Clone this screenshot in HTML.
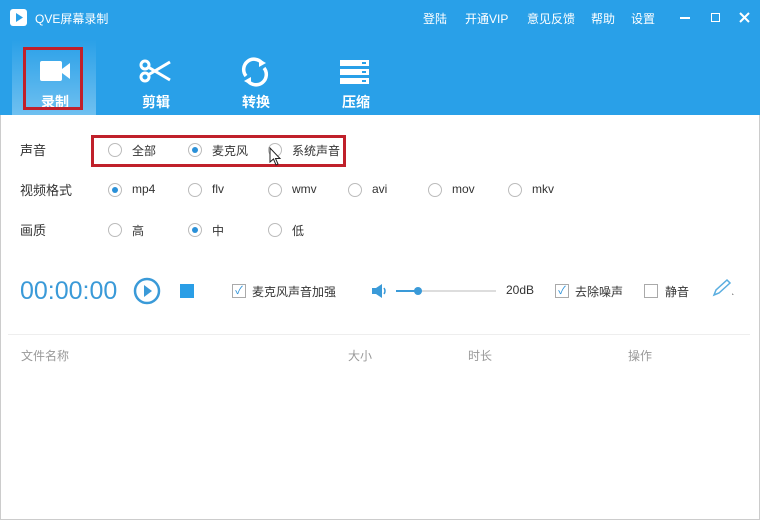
<!DOCTYPE html><html><head><meta charset="utf-8"><style>
*{margin:0;padding:0;box-sizing:border-box}
body{width:760px;height:520px;overflow:hidden;background:#fff;font-family:"Liberation Sans","Noto Sans CJK SC",sans-serif;font-size:12px;color:#333;position:relative}
.hdr{position:absolute;left:0;top:0;width:760px;height:115px;background:#29a0e8}
.a{position:absolute}
.t{color:#fff;font-size:12px}
.tab{position:absolute;top:58px;width:40px;text-align:center;color:#fff;font-size:14px;font-weight:bold}
.r{position:absolute;width:14px;height:14px;border:1px solid #bbb;border-radius:50%;background:#fff}
.r.on::after{content:"";position:absolute;left:3px;top:3px;width:6px;height:6px;border-radius:50%;background:#2a90d8}
.lb{position:absolute;font-size:12px;color:#333}
.cb{position:absolute;width:14px;height:14px;border:1px solid #aaa;background:#fff;color:#2a90d8;font-size:11px;line-height:12px;text-align:center}
.g{color:#999}
</style></head><body>
<div class="hdr"></div>
<div class="a" style="left:12px;top:40px;width:84px;height:75px;background:linear-gradient(#2aa0e8,#6fc0f0)"></div>
<div class="a" style="left:10px;top:9px;width:17px;height:17px;background:#fff;border-radius:3px"></div>
<svg class="a" style="left:10px;top:9px" width="17" height="17"><polygon points="6,4 6,13 13,8.5" fill="#29a0e8"/></svg>
<div class="a t" style="left:35px;top:10px">QVE屏幕录制</div>
<div class="a t" style="left:423px;top:10px">登陆</div>
<div class="a t" style="left:465px;top:10px">开通VIP</div>
<div class="a t" style="left:527px;top:10px">意见反馈</div>
<div class="a t" style="left:591px;top:10px">帮助</div>
<div class="a t" style="left:631px;top:10px">设置</div>
<div class="a" style="left:680px;top:17px;width:10px;height:2px;background:#fff"></div>
<div class="a" style="left:711px;top:13px;width:9px;height:9px;border:1.5px solid #fff"></div>
<svg class="a" style="left:739px;top:12px" width="11" height="11"><path d="M1 1L10 10M10 1L1 10" stroke="#fff" stroke-width="2"/></svg>
<!-- tab icons -->
<svg class="a" style="left:38px;top:59px" width="34" height="24"><rect x="2" y="2" width="22" height="20" rx="2" fill="#fff"/><polygon points="24,10 32,4 32,20 24,14" fill="#fff"/></svg>
<svg class="a" style="left:138px;top:58px" width="36" height="26" fill="none" stroke="#fff" stroke-width="3"><circle cx="7" cy="7" r="4"/><circle cx="7" cy="19" r="4"/><path d="M10 9L32 22M10 17L32 4"/></svg>
<svg class="a" style="left:240px;top:57px" width="30" height="30" fill="none" stroke="#fff" stroke-width="3.5"><path d="M6 19A10 10 0 0 1 22 6"/><path d="M24 11A10 10 0 0 1 8 24"/><polygon points="19,2 26,6 19,10" fill="#fff" stroke="none"/><polygon points="11,20 4,24 11,28" fill="#fff" stroke="none"/></svg>
<svg class="a" style="left:340px;top:60px" width="30" height="24"><rect x="0" y="0" width="29" height="6" fill="#fff"/><rect x="0" y="9" width="29" height="6" fill="#fff"/><rect x="0" y="18" width="29" height="6" fill="#fff"/><rect x="22" y="2" width="4" height="2" fill="#29a0e8"/><rect x="22" y="11" width="4" height="2" fill="#29a0e8"/><rect x="22" y="20" width="4" height="2" fill="#29a0e8"/></svg>
<div class="tab" style="left:35px;top:92px">录制</div>
<div class="tab" style="left:136px;top:92px">剪辑</div>
<div class="tab" style="left:236px;top:92px">转换</div>
<div class="tab" style="left:336px;top:92px">压缩</div>
<div class="a" style="left:23px;top:47px;width:60px;height:63px;border:3px solid #c0202a"></div>
<!-- options -->
<div class="lb" style="left:20px;top:140px;font-size:13px">声音</div>
<div class="lb" style="left:20px;top:180px;font-size:13px">视频格式</div>
<div class="lb" style="left:20px;top:220px;font-size:13px">画质</div>
<div class="r" style="left:108px;top:143px"></div><div class="lb" style="left:132px;top:142px">全部</div>
<div class="r on" style="left:188px;top:143px"></div><div class="lb" style="left:212px;top:142px">麦克风</div>
<div class="r" style="left:268px;top:143px"></div><div class="lb" style="left:292px;top:142px">系统声音</div>
<div class="a" style="left:91px;top:135px;width:255px;height:32px;border:3px solid #c0202a"></div>
<svg class="a" style="left:269px;top:147px" width="14" height="20"><path d="M1 1L1 15L4.5 12L7 18L9 17L6.5 11.5L11 11.5Z" fill="#fff" stroke="#222"/></svg>
<div class="r on" style="left:108px;top:183px"></div><div class="lb" style="left:132px;top:182px">mp4</div>
<div class="r" style="left:188px;top:183px"></div><div class="lb" style="left:212px;top:182px">flv</div>
<div class="r" style="left:268px;top:183px"></div><div class="lb" style="left:292px;top:182px">wmv</div>
<div class="r" style="left:348px;top:183px"></div><div class="lb" style="left:372px;top:182px">avi</div>
<div class="r" style="left:428px;top:183px"></div><div class="lb" style="left:452px;top:182px">mov</div>
<div class="r" style="left:508px;top:183px"></div><div class="lb" style="left:532px;top:182px">mkv</div>
<div class="r" style="left:108px;top:223px"></div><div class="lb" style="left:132px;top:222px">高</div>
<div class="r on" style="left:188px;top:223px"></div><div class="lb" style="left:212px;top:222px">中</div>
<div class="r" style="left:268px;top:223px"></div><div class="lb" style="left:292px;top:222px">低</div>
<!-- controls -->
<div class="a" style="left:20px;top:277px;font-size:25px;color:#3a9ad8">00:00:00</div>
<svg class="a" style="left:133px;top:277px" width="28" height="28"><circle cx="14" cy="14" r="12" fill="none" stroke="#3a9ad8" stroke-width="2.5"/><polygon points="11,8 11,20 19,14" fill="#3a9ad8"/></svg>
<div class="a" style="left:180px;top:284px;width:14px;height:14px;background:#2a9ee6"></div>
<div class="cb" style="left:232px;top:284px">✓</div><div class="lb" style="left:252px;top:283px">麦克风声音加强</div>
<svg class="a" style="left:372px;top:283px" width="16" height="16"><polygon points="0,5 4,5 10,1 10,15 4,11 0,11" fill="#3a9ad8"/><path d="M12 5Q14 8 12 11" stroke="#3a9ad8" stroke-width="1.5" fill="none"/></svg>
<div class="a" style="left:396px;top:290px;width:100px;height:2px;background:#ddd"></div>
<div class="a" style="left:396px;top:290px;width:22px;height:2px;background:#3a9ad8"></div>
<div class="a" style="left:414px;top:287px;width:8px;height:8px;border-radius:50%;background:#3a9ad8"></div>
<div class="lb" style="left:506px;top:283px">20dB</div>
<div class="cb" style="left:555px;top:284px">✓</div><div class="lb" style="left:575px;top:283px">去除噪声</div>
<div class="cb" style="left:644px;top:284px"></div><div class="lb" style="left:665px;top:283px">静音</div>
<svg class="a" style="left:711px;top:278px" width="24" height="20"><path d="M3 17L5 12L16 2L19 5L8 15Z" fill="none" stroke="#5aaee0" stroke-width="1.5"/><path d="M21 15L23 17L21 17Z" fill="#999"/></svg>
<div class="a" style="left:8px;top:334px;width:742px;height:1px;background:#eee"></div>
<div class="lb g" style="left:21px;top:347px">文件名称</div>
<div class="lb g" style="left:348px;top:347px">大小</div>
<div class="lb g" style="left:468px;top:347px">时长</div>
<div class="lb g" style="left:628px;top:347px">操作</div>
<div class="a" style="left:0;top:115px;width:1px;height:405px;background:#ccc"></div>
<div class="a" style="left:759px;top:115px;width:1px;height:405px;background:#ccc"></div>
<div class="a" style="left:0;top:519px;width:760px;height:1px;background:#ccc"></div>
</body></html>
